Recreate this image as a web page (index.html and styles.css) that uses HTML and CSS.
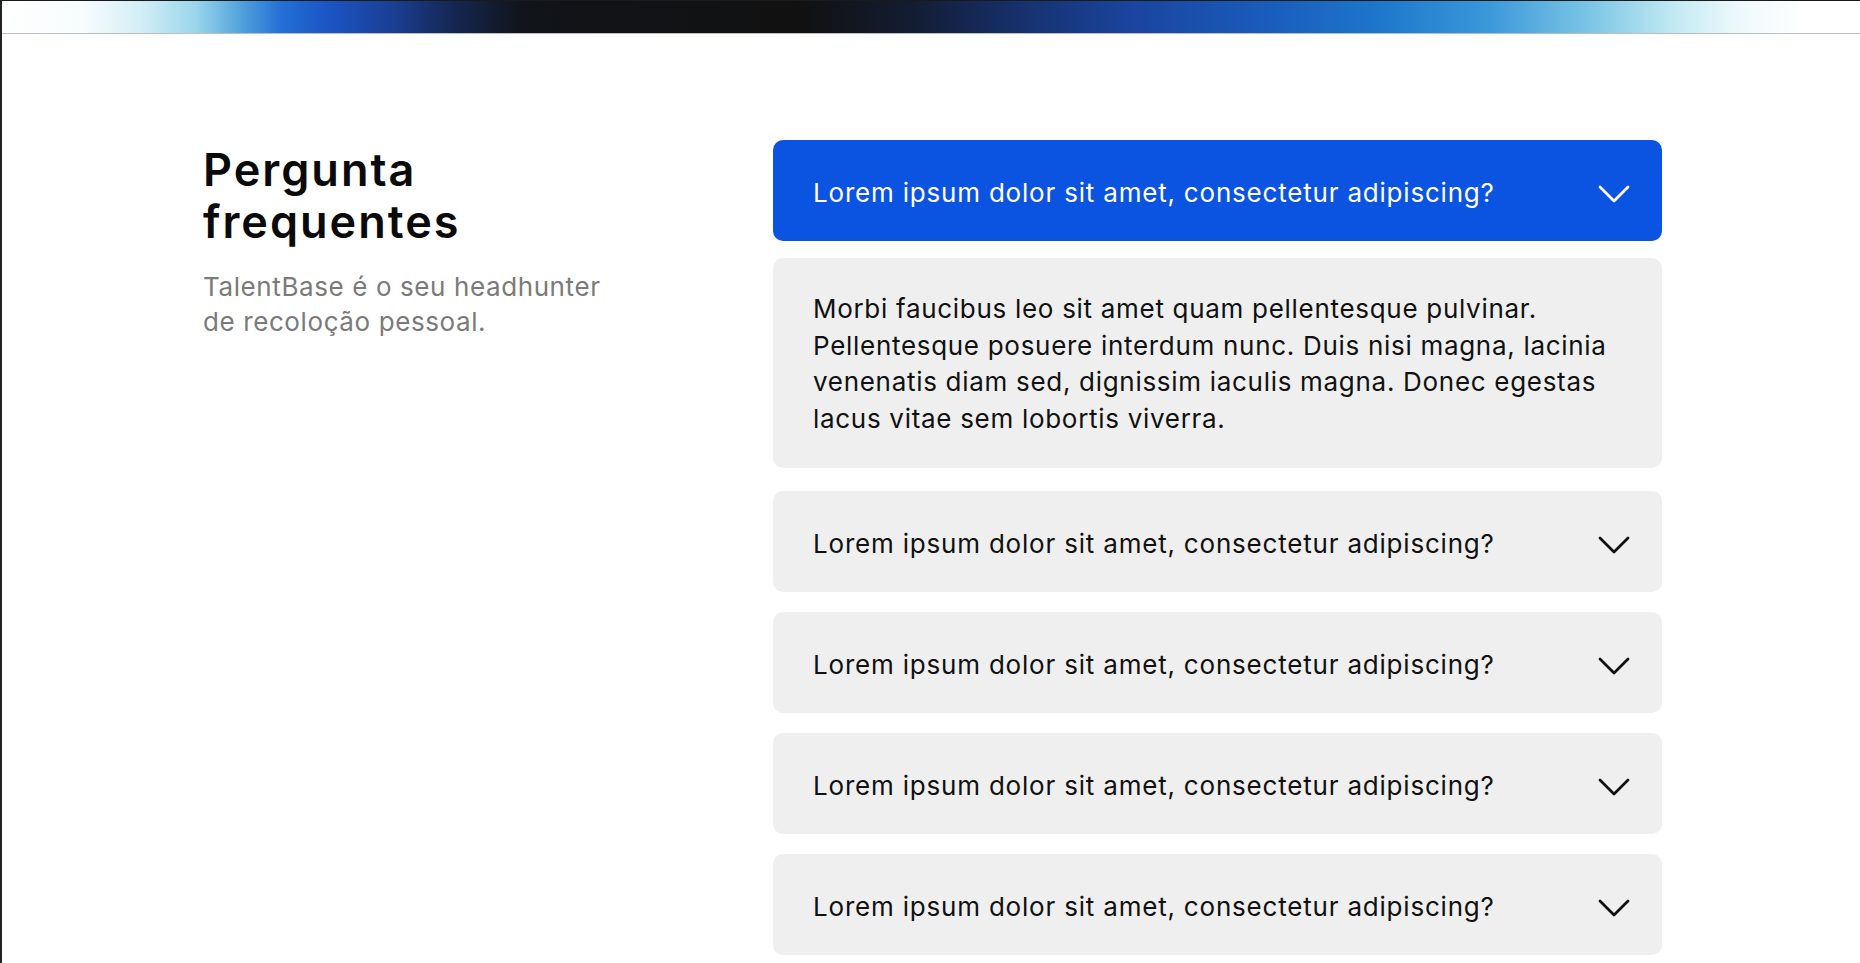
FILE: index.html
```html
<!DOCTYPE html>
<html lang="pt-BR">
<head>
<meta charset="utf-8">
<title>Perguntas frequentes</title>
<link rel="stylesheet" href="styles.css">
</head>
<body>
<div class="frame">
  <div class="top-bar"></div>
  <section class="faq">
    <div class="faq-intro">
      <h1 class="faq-title">Pergunta frequentes</h1>
      <p class="faq-sub">TalentBase é o seu headhunter de recoloção pessoal.</p>
    </div>
    <div class="faq-list">
      <div class="faq-item open">
        <button class="faq-q">
          <span>Lorem ipsum dolor sit amet, consectetur adipiscing?</span>
          <svg class="chev" viewBox="0 0 32 18" width="32" height="18"><path d="M2 2 L16 16 L30 2" fill="none" stroke="currentColor" stroke-width="2.8" stroke-linecap="round" stroke-linejoin="round"/></svg>
        </button>
        <div class="faq-a">Morbi faucibus leo sit amet quam pellentesque pulvinar. Pellentesque posuere interdum nunc. Duis nisi magna, lacinia venenatis diam sed, dignissim iaculis magna. Donec egestas lacus vitae sem lobortis viverra.</div>
      </div>
      <div class="faq-item">
        <button class="faq-q">
          <span>Lorem ipsum dolor sit amet, consectetur adipiscing?</span>
          <svg class="chev" viewBox="0 0 32 18" width="32" height="18"><path d="M2 2 L16 16 L30 2" fill="none" stroke="currentColor" stroke-width="2.8" stroke-linecap="round" stroke-linejoin="round"/></svg>
        </button>
      </div>
      <div class="faq-item">
        <button class="faq-q">
          <span>Lorem ipsum dolor sit amet, consectetur adipiscing?</span>
          <svg class="chev" viewBox="0 0 32 18" width="32" height="18"><path d="M2 2 L16 16 L30 2" fill="none" stroke="currentColor" stroke-width="2.8" stroke-linecap="round" stroke-linejoin="round"/></svg>
        </button>
      </div>
      <div class="faq-item">
        <button class="faq-q">
          <span>Lorem ipsum dolor sit amet, consectetur adipiscing?</span>
          <svg class="chev" viewBox="0 0 32 18" width="32" height="18"><path d="M2 2 L16 16 L30 2" fill="none" stroke="currentColor" stroke-width="2.8" stroke-linecap="round" stroke-linejoin="round"/></svg>
        </button>
      </div>
      <div class="faq-item">
        <button class="faq-q">
          <span>Lorem ipsum dolor sit amet, consectetur adipiscing?</span>
          <svg class="chev" viewBox="0 0 32 18" width="32" height="18"><path d="M2 2 L16 16 L30 2" fill="none" stroke="currentColor" stroke-width="2.8" stroke-linecap="round" stroke-linejoin="round"/></svg>
        </button>
      </div>
    </div>
  </section>
</div>
</body>
</html>
```

FILE: styles.css
```css
* { box-sizing: border-box; }
html, body { margin: 0; padding: 0; background: #fff; }
body {
  font-family: Inter, "Noto Sans", sans-serif;
  color: #111;
  overflow: hidden;
}
.frame {
  min-height: 963px;
  border-top: 1px solid #1a1a1a;
  border-left: 2px solid #222;
}
.top-bar {
  height: 33px;
  border-bottom: 1px solid #b9bfc4;
  background: linear-gradient(90deg,
    #ffffff 0%, #f6fcfd 4.5%, #d2eef6 7.5%, #98d5ec 10.5%, #4d9fdc 13%,
    #2470d6 15%, #1b55c6 17.5%, #1a3f94 21%, #15254f 24.5%, #111419 28%,
    #111111 43%, #131c32 49%, #16306a 54.5%, #1a45a0 61%, #1a5cbc 68%,
    #1d76cb 74%, #3b98da 80%, #7cc6e6 85.5%, #c2e9f3 90%, #eef9fc 93.5%, #ffffff 97%, #ffffff 100%);
}
.faq {
  display: flex;
  padding: 106px 0 0 201px;
}
.faq-intro {
  flex: 0 0 570px;
}
.faq-title {
  margin: 4px 0 0;
  max-width: 400px;
  font-size: 45px;
  line-height: 52px;
  font-weight: 600;
  letter-spacing: 2px;
  color: #0a0a0a;
}
.faq-sub {
  margin: 21px 0 0;
  max-width: 415px;
  font-size: 26px;
  line-height: 35px;
  letter-spacing: 0.6px;
  color: #7a7a7a;
}
.faq-list {
  width: 889px;
  display: flex;
  flex-direction: column;
  gap: 20px;
}
.faq-item {
  display: flex;
  flex-direction: column;
  gap: 17px;
}
.faq-item.open { margin-bottom: 3px; }
.faq-q {
  display: flex;
  align-items: center;
  justify-content: space-between;
  width: 100%;
  height: 101px;
  padding: 4px 32px 0 40px;
  border: 0;
  border-radius: 10px;
  background: #efefef;
  color: #111;
  font-family: inherit;
  font-size: 26px;
  letter-spacing: 0.8px;
  text-align: left;
  cursor: pointer;
}
.faq-item.open .faq-q {
  background: #0b54e2;
  color: #fff;
}
.chev { flex: none; margin-top: 2px; }
.faq-a {
  padding: 33px 40px 31px 40px;
  border-radius: 10px;
  background: #efefef;
  font-size: 26px;
  line-height: 36.5px;
  letter-spacing: 0.7px;
  color: #111;
}
```
